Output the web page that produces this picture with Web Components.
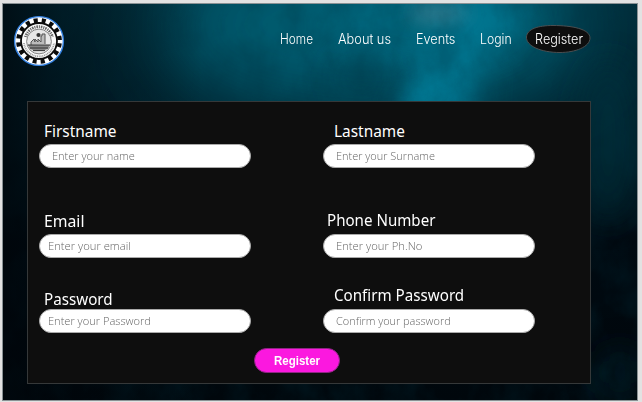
<!DOCTYPE html>
<html lang="en">
<head>
<meta charset="utf-8">
<title>Register</title>
<style>html,body{margin:0;height:100%;overflow:hidden;background:#e2e2e2}</style>
</head>
<body>
<register-page></register-page>
<script>
const define = (name, html, setup) => customElements.define(name, class extends HTMLElement {
  constructor() {
    super();
    this.attachShadow({ mode: 'open' }).innerHTML = html;
  }
  connectedCallback() { if (setup) setup(this, this.shadowRoot); }
});

/* Text scaled horizontally so that its advance equals the width attribute. */
define('fit-text', `<style>
  :host{display:block;white-space:nowrap;line-height:20px;height:20px;width:var(--w)}
  span{display:inline-block;transform-origin:0 50%}
</style><span><slot></slot></span>`, (el, root) => {
  const w = +el.getAttribute('width');
  el.style.setProperty('--w', w + 'px');
  const s = root.querySelector('span');
  requestAnimationFrame(() => { s.style.transform = `scaleX(${w / s.offsetWidth})`; });
});

define('night-sky', `<style>
  :host{display:block;position:absolute;inset:0;z-index:0}
  svg{display:block}
</style>
<svg width="634" height="397" viewBox="3 4 634 397">
  <defs>
    <linearGradient id="base" x2="0" y2="1">
      <stop offset="0" stop-color="#002b38"/><stop offset=".3" stop-color="#001f2a"/>
      <stop offset=".6" stop-color="#000a11"/><stop offset="1" stop-color="#00070c"/>
    </linearGradient>
    <linearGradient id="left"><stop offset="0" stop-color="#00050a" stop-opacity=".75"/><stop offset=".3" stop-color="#00050a" stop-opacity=".4"/><stop offset="1" stop-color="#00050a" stop-opacity="0"/></linearGradient>
    <filter id="b40" x="-100%" y="-100%" width="300%" height="300%"><feGaussianBlur stdDeviation="40"/></filter>
    <filter id="b14" x="-100%" y="-100%" width="300%" height="300%"><feGaussianBlur stdDeviation="15"/></filter>
    <filter id="b8" x="-100%" y="-100%" width="300%" height="300%"><feGaussianBlur stdDeviation="9"/></filter>
    <filter id="cloud" x="0" y="0" width="100%" height="100%">
      <feTurbulence type="fractalNoise" baseFrequency=".03 .022" numOctaves="6" seed="8"/>
      <feColorMatrix values="0 0 0 0 0  0 0 0 0 .03  0 0 0 0 .05  2.2 0 0 0 -.75"/>
    </filter>
  </defs>
  <rect x="3" y="4" width="634" height="397" fill="url(#base)"/>
  <ellipse cx="375" cy="25" rx="215" ry="90" fill="#005b70" filter="url(#b40)"/>
  <ellipse cx="608" cy="140" rx="30" ry="80" fill="#00303c" opacity=".6" filter="url(#b14)"/>
  <ellipse cx="425" cy="25" rx="100" ry="45" fill="#00687f" opacity=".7" filter="url(#b14)"/>
  <path d="M395 125L480 125L482 60L535 0L460 -10L430 50Z" fill="#007f9b" opacity=".65" filter="url(#b14)"/>
  <ellipse cx="434" cy="100" rx="28" ry="20" fill="#0083a0" opacity=".75" filter="url(#b8)"/>
  <ellipse cx="438" cy="13" rx="30" ry="9" fill="#408295" opacity=".8" filter="url(#b8)"/>
  <ellipse cx="360" cy="78" rx="30" ry="22" fill="#00323f" opacity=".35" filter="url(#b14)"/>
  <ellipse cx="620" cy="372" rx="25" ry="24" fill="#001c25" opacity=".6" filter="url(#b14)"/>
  <rect x="3" y="4" width="634" height="397" filter="url(#cloud)" opacity=".26"/>
  <rect x="3" y="4" width="200" height="397" fill="url(#left)"/>
</svg>`);

define('college-seal', `<style>:host{display:block;width:52px;height:52px}svg{display:block}</style>
<svg width="52" height="52" viewBox="0 0 52 52">
  <circle cx="26" cy="26" r="24.4" fill="#fff" stroke="#3482e2" stroke-width="1.4"/>
  <circle cx="26" cy="26" r="20.6" fill="none" stroke="#0b0b0b" stroke-width="4.6" stroke-dasharray="4 4.09" transform="rotate(6 26 26)"/>
  <circle cx="26" cy="26" r="18" fill="#fafafa" stroke="#0b0b0b" stroke-width="1.8"/>
  <path d="M12.5 22A14 14 0 0 1 39.5 22" fill="none" stroke="#666" stroke-width="2.8" stroke-dasharray="1.1 .9 1.6 .9"/>
  <path d="M11 28A15.1 15.1 0 0 0 41 28" fill="none" stroke="#999" stroke-width="1.8" stroke-dasharray="1 .8"/>
  <circle cx="26" cy="26.5" r="12.4" fill="#e6e6e6" stroke="#666" stroke-width=".8"/>
  <circle cx="25.5" cy="20" r="2.1" fill="#333"/>
  <path d="M18 30v-3l3-3 1 3v-3l3 3v-3l3 3v-6h1v-2h3v10" fill="#bbb" stroke="#555" stroke-width="1"/>
  <path d="M15 30h22l-2 4q-9 4-18 0z" fill="#888"/>
  <path d="M15 30h22M17 33h18M20 35.6h12" stroke="#333" stroke-width="1" fill="none"/>
</svg>`);

define('nav-bar', `<style>
  :host{display:flex;position:relative;z-index:1;height:97px;padding:11px 0 0 10px;box-sizing:border-box;align-items:flex-start;
    color:#fff;font:300 14px Inter,"Liberation Sans",sans-serif}
  nav{display:flex;margin:10px 0 0 215px;align-items:flex-start}
  fit-text{margin:4px 25px 0 0}
  .pill{position:relative;width:65px;height:28px;margin:0 0 0 -10.5px;box-sizing:border-box;padding:0 0 0 9px}
  .pill svg{position:absolute;left:0;top:0}
  .pill fit-text{position:relative;margin:4px 0 0}
</style>
<college-seal></college-seal>
<nav>
  <fit-text width="33">Home</fit-text><fit-text width="53">About us</fit-text>
  <fit-text width="39">Events</fit-text><fit-text width="31.5">Login</fit-text>
  <div class="pill"><svg width="65" height="28"><path d="M.5 12C1 4 12 .5 27 .5C46 .5 64 4 64 13C64 22 49 27.5 34 27.5C15 27.5 0 21 .5 12Z" fill="#0e0e0e" stroke="#4b4e50"/></svg><fit-text width="48">Register</fit-text></div>
</nav>`);

/* One caption above a rounded entry box; --x and --gap place the caption, --in indents the hint. */
define('form-field', `<style>
  :host{display:flex;flex-direction:column;justify-content:flex-end;width:212px;height:100%}
  .caption{color:#fff;font:15.4px "Noto Sans",sans-serif;margin:0 0 var(--gap) var(--x)}
  .box{box-sizing:border-box;height:24px;border-radius:12px;background:#fff;border:1px solid #aaa;padding:1px 0 0 var(--in);
    color:#666;font:300 11.5px "Open Sans","Noto Sans",sans-serif}
</style>
<div class="caption"><slot name="caption"></slot></div>
<div class="box"><slot name="hint"></slot></div>`);

define('pill-button', `<style>
  :host{display:flex;box-sizing:border-box;width:86px;height:25px;border-radius:12.5px;background:#fb18df;border:1px solid #8f2583;
    justify-content:center;align-items:center;color:#fff;font:bold 13px "Liberation Sans",sans-serif}
</style><slot></slot>`);

define('register-form', `<style>
  :host{display:block;position:relative;z-index:1;box-sizing:border-box;width:564px;height:283px;margin-left:24px;
    background:#0e0e0e;border:1px solid #353839;padding-left:11px}
  .grid{display:grid;grid-template-columns:212px 212px;column-gap:72px;grid-template-rows:66px 90px 75px}
  pill-button{margin:15px 0 0 215px}
</style>
<div class="grid">
  <form-field style="--x:5px;--gap:2px;--in:12px"><fit-text slot="caption" width="72">Firstname</fit-text><fit-text slot="hint" width="82.5">Enter your name</fit-text></form-field>
  <form-field style="--x:11px;--gap:2px;--in:12px"><fit-text slot="caption" width="71">Lastname</fit-text><fit-text slot="hint" width="99">Enter your Surname</fit-text></form-field>
  <form-field style="--x:5px;--gap:2px;--in:8px"><fit-text slot="caption" width="41">Email</fit-text><fit-text slot="hint" width="83">Enter your email</fit-text></form-field>
  <form-field style="--x:4px;--gap:3px;--in:12px"><fit-text slot="caption" width="108">Phone Number</fit-text><fit-text slot="hint" width="86">Enter your Ph.No</fit-text></form-field>
  <form-field style="--x:5px;--gap:-1px;--in:8px"><fit-text slot="caption" width="69">Password</fit-text><fit-text slot="hint" width="103">Enter your Password</fit-text></form-field>
  <form-field style="--x:11px;--gap:3px;--in:12px"><fit-text slot="caption" width="130">Confirm Password</fit-text><fit-text slot="hint" width="115">Confirm your password</fit-text></form-field>
</div>
<pill-button><fit-text width="46">Register</fit-text></pill-button>`);

define('register-page', `<style>
  :host{display:block;box-sizing:border-box;width:642px;height:402px;padding:3px 0 0 2px;background:#e2e2e2}
  main{position:relative;box-sizing:content-box;width:634px;height:396px;border:1px solid #899194;overflow:hidden}
</style>
<main><night-sky></night-sky><nav-bar></nav-bar><register-form></register-form></main>`);
</script>
</body>
</html>
